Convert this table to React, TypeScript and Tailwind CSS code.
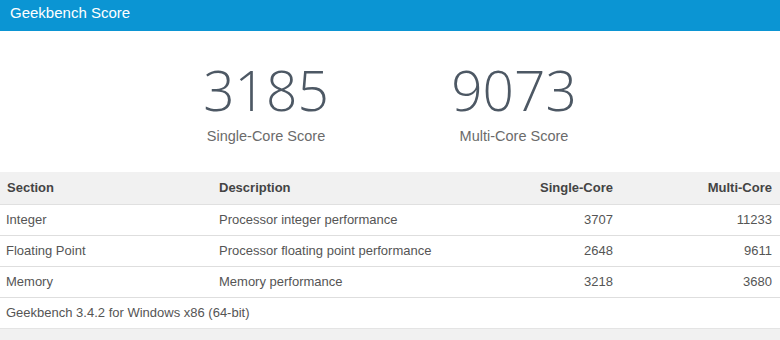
const rows = [
  { section: 'Integer', description: 'Processor integer performance', single: '3707', multi: '11233' },
  { section: 'Floating Point', description: 'Processor floating point performance', single: '2648', multi: '9611' },
  { section: 'Memory', description: 'Memory performance', single: '3218', multi: '3680' },
]

const scores = [
  { value: '3185', label: 'Single-Core Score' },
  { value: '9073', label: 'Multi-Core Score' },
]

export default function App() {
  return (
    <div className="w-[780px] h-[340px] overflow-hidden bg-white font-['Liberation_Sans',Arial,sans-serif]">
      <div className="h-[31px] bg-[#0b95d3] px-[10px] pt-[2px] text-[15px] leading-[22px] text-white">
        Geekbench Score
      </div>

      <div className="flex justify-center pt-[21px] h-[141px]">
        {scores.map((s) => (
          <div key={s.label} className="w-[248px] flex flex-col items-center">
            <div className="font-['Open_Sans',sans-serif] font-light text-[55px] leading-[75px] text-[#4d5864]">
              {s.value}
            </div>
            <div className="text-[14.5px] leading-[18px] text-[#6b6b6b]">{s.label}</div>
          </div>
        ))}
      </div>

      <div className="text-[13px]">
        <div className="grid grid-cols-[212px_1fr_150px_160px] h-[33px] items-center bg-[#f1f1f1] border-b border-[#e0e0e0] font-bold text-[#444]">
          <div className="px-[7px]">Section</div>
          <div className="px-[7px]">Description</div>
          <div className="px-[7px] text-right">Single-Core</div>
          <div className="px-[8px] text-right">Multi-Core</div>
        </div>
        {rows.map((r) => (
          <div
            key={r.section}
            className="grid grid-cols-[212px_1fr_150px_160px] h-[31px] items-center border-b border-[#dedede] text-[#555]"
          >
            <div className="px-[6px]">{r.section}</div>
            <div className="px-[7px]">{r.description}</div>
            <div className="px-[7px] text-right">{r.single}</div>
            <div className="px-[8px] text-right">{r.multi}</div>
          </div>
        ))}
        <div className="h-[31px] flex items-center px-[6px] border-b border-[#e4e4e4] text-[#555]">
          Geekbench 3.4.2 for Windows x86 (64-bit)
        </div>
        <div className="h-[12px] bg-[#f1f1f1]" />
      </div>
    </div>
  )
}
